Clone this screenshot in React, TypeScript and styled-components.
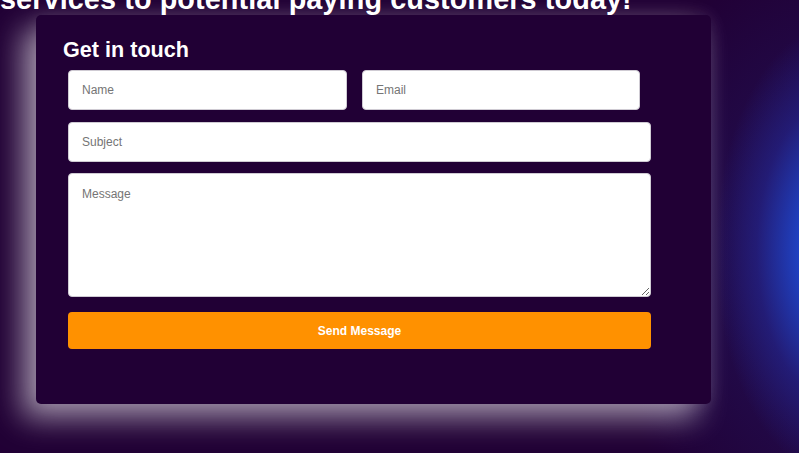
import React from "react";
import styled, { createGlobalStyle } from "styled-components";

const GlobalStyle = createGlobalStyle`
  html, body {
    margin: 0;
    padding: 0;
    height: 100%;
    overflow: hidden;
  }
  body {
    background-color: #210035;
    background-image:
      radial-gradient(ellipse 130px 230px at 845px 250px, rgba(31, 68, 200, 1) 0%, rgba(31, 68, 200, 0.95) 35%, rgba(36, 40, 150, 0.55) 68%, rgba(33, 0, 53, 0) 100%),
      radial-gradient(ellipse 260px 330px at 860px 260px, rgba(35, 40, 130, 0.55) 0%, rgba(33, 0, 53, 0) 100%);
    background-repeat: no-repeat;
    font-family: "Liberation Sans", Arial, sans-serif;
  }
`;

const Page = styled.div`
  width: 799px;
  height: 453px;
  overflow: hidden;
`;

const Headline = styled.h1`
  margin: -17px 0 0 0;
  font-size: 28.8px;
  line-height: 32px;
  font-weight: 700;
  color: #ffffff;
  white-space: nowrap;
  letter-spacing: 0.1px;
`;

const Card = styled.section`
  box-sizing: border-box;
  width: 675px;
  height: 389px;
  margin: 0 0 0 36px;
  padding: 24px 0 0 27px;
  background: #210035;
  border-radius: 5px;
  box-shadow: -14px 14px 30px rgba(255, 255, 255, 0.55), 0 0 18px rgba(255, 255, 255, 0.1);
`;

const Title = styled.h2`
  margin: 0 0 9px 0;
  font-size: 21.6px;
  line-height: 22px;
  font-weight: 700;
  color: #ffffff;
`;

const Form = styled.form`
  display: flex;
  flex-direction: column;
  width: 583px;
  margin-left: 5px;
`;

const Row = styled.div`
  display: flex;
  gap: 15px;
`;

const fieldBase = `
  box-sizing: border-box;
  border: 1px solid #cfcbd3;
  border-radius: 4px;
  background: #ffffff;
  font-family: "Liberation Sans", Arial, sans-serif;
  font-size: 12px;
  color: #333333;
  outline: none;
  &::placeholder {
    color: #757575;
    opacity: 1;
  }
`;

const Input = styled.input<{ $w?: number; $mt?: number }>`
  ${fieldBase}
  width: ${(p) => (p.$w ? `${p.$w}px` : "100%")};
  height: 40px;
  padding: 0 13px;
  margin-top: ${(p) => p.$mt ?? 0}px;
`;

const TextArea = styled.textarea`
  ${fieldBase}
  display: block;
  width: 100%;
  height: 124px;
  margin-top: 11px;
  padding: 13px 13px;
  resize: both;
`;

const Button = styled.button`
  box-sizing: border-box;
  width: 100%;
  height: 37px;
  margin-top: 15px;
  border: none;
  border-radius: 4px;
  background: #ff9100;
  color: #ffffff;
  font-family: "Liberation Sans", Arial, sans-serif;
  font-size: 12px;
  font-weight: 700;
  cursor: pointer;
`;

export default function App() {
  return (
    <>
      <GlobalStyle />
      <Page>
        <Headline>services to potential paying customers today!</Headline>
        <Card>
          <Title>Get in touch</Title>
          <Form onSubmit={(e) => e.preventDefault()}>
            <Row>
              <Input $w={279} type="text" placeholder="Name" />
              <Input $w={278} type="email" placeholder="Email" />
            </Row>
            <Input $mt={12} type="text" placeholder="Subject" />
            <TextArea placeholder="Message" />
            <Button type="submit">Send Message</Button>
          </Form>
        </Card>
      </Page>
    </>
  );
}
